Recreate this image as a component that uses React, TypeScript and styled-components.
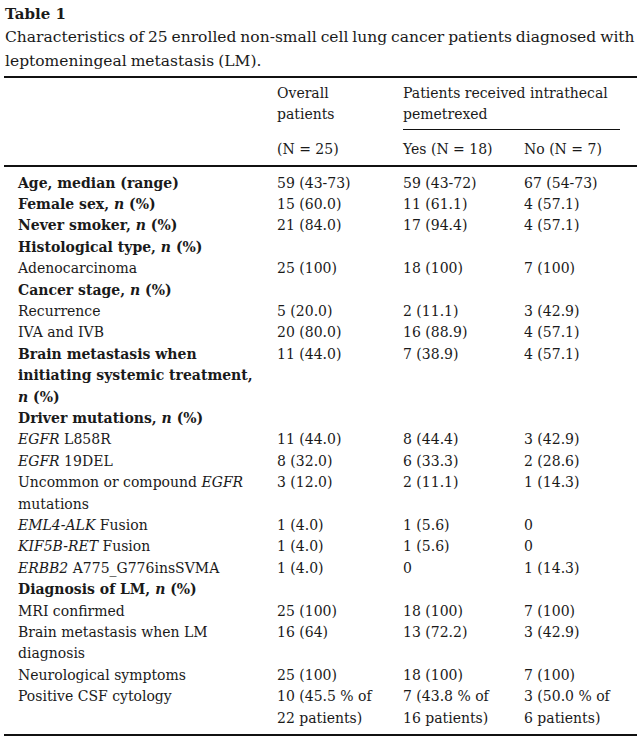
import React from 'react';
import styled, { createGlobalStyle } from 'styled-components';

const GlobalStyle = createGlobalStyle`
  body {
    margin: 0;
    background: #ffffff;
    color: #1a1a1a;
  }
`;

const Page = styled.div`
  width: 637px;
  padding: 4px 0 0 4px;
  box-sizing: border-box;
  overflow: hidden;
`;

const Caption = styled.div`
  font-family: 'DejaVu Serif', serif;
  padding-left: 1px;
`;

const Title = styled.div`
  font-weight: bold;
  font-size: 15px;
  line-height: 21px;
`;

const CaptionText = styled.div`
  font-size: 15.5px;
  line-height: 24px;
  word-spacing: -1px;
`;

const Table = styled.table`
  width: 633px;
  margin-top: 3px;
  border-collapse: collapse;
  table-layout: fixed;
  border-top: 2px solid #111;
  border-bottom: 2px solid #111;
`;

const HeadCell = styled.th<{ $top?: boolean }>`
  font-family: 'DejaVu Serif', serif;
  font-size: 14px;
  line-height: 20.5px;
  font-weight: normal;
  text-align: left;
  vertical-align: top;
  white-space: nowrap;
  padding: ${p => (p.$top ? '5px 0 0 0' : '9px 0 5px 0')};
`;

const HeadRow = styled.tr`
  &:last-child th {
    border-bottom: 2px solid #111;
  }
`;

const GroupHead = styled.div`
  margin-right: 17px;
  padding-bottom: 5px;
  border-bottom: 1.5px solid #111;
`;

const Body = styled.tbody`
  tr:first-child td {
    padding-top: 6px;
  }
  tr:last-child td {
    padding-bottom: 5px;
  }
`;

const Cell = styled.td<{ $label?: boolean; $bold?: boolean }>`
  font-family: 'DejaVu Serif', serif;
  font-size: 14px;
  line-height: 21.4px;
  font-weight: ${p => (p.$bold ? 'bold' : 'normal')};
  vertical-align: top;
  white-space: nowrap;
  padding: 0 0 0 ${p => (p.$label ? '14px' : '0')};
`;

const Em = styled.i`
  font-style: italic;
`;

type Row = {
  label: React.ReactNode;
  bold?: boolean;
  v?: React.ReactNode[];
};

const n = <Em>n</Em>;

const rows: Row[] = [
  { label: 'Age, median (range)', bold: true, v: ['59 (43-73)', '59 (43-72)', '67 (54-73)'] },
  { label: <>Female sex, {n} (%)</>, bold: true, v: ['15 (60.0)', '11 (61.1)', '4 (57.1)'] },
  { label: <>Never smoker, {n} (%)</>, bold: true, v: ['21 (84.0)', '17 (94.4)', '4 (57.1)'] },
  { label: <>Histological type, {n} (%)</>, bold: true },
  { label: 'Adenocarcinoma', v: ['25 (100)', '18 (100)', '7 (100)'] },
  { label: <>Cancer stage, {n} (%)</>, bold: true },
  { label: 'Recurrence', v: ['5 (20.0)', '2 (11.1)', '3 (42.9)'] },
  { label: 'IVA and IVB', v: ['20 (80.0)', '16 (88.9)', '4 (57.1)'] },
  {
    label: (
      <>
        Brain metastasis when
        <br />
        initiating systemic treatment,
        <br />
        {n} (%)
      </>
    ),
    bold: true,
    v: ['11 (44.0)', '7 (38.9)', '4 (57.1)'],
  },
  { label: <>Driver mutations, {n} (%)</>, bold: true },
  { label: <><Em>EGFR</Em> L858R</>, v: ['11 (44.0)', '8 (44.4)', '3 (42.9)'] },
  { label: <><Em>EGFR</Em> 19DEL</>, v: ['8 (32.0)', '6 (33.3)', '2 (28.6)'] },
  {
    label: (
      <>
        Uncommon or compound <Em>EGFR</Em>
        <br />
        mutations
      </>
    ),
    v: ['3 (12.0)', '2 (11.1)', '1 (14.3)'],
  },
  { label: <><Em>EML4-ALK</Em> Fusion</>, v: ['1 (4.0)', '1 (5.6)', '0'] },
  { label: <><Em>KIF5B-RET</Em> Fusion</>, v: ['1 (4.0)', '1 (5.6)', '0'] },
  { label: <><Em>ERBB2</Em> A775_G776insSVMA</>, v: ['1 (4.0)', '0', '1 (14.3)'] },
  { label: <>Diagnosis of LM, {n} (%)</>, bold: true },
  { label: 'MRI confirmed', v: ['25 (100)', '18 (100)', '7 (100)'] },
  {
    label: (
      <>
        Brain metastasis when LM
        <br />
        diagnosis
      </>
    ),
    v: ['16 (64)', '13 (72.2)', '3 (42.9)'],
  },
  { label: 'Neurological symptoms', v: ['25 (100)', '18 (100)', '7 (100)'] },
  {
    label: 'Positive CSF cytology',
    v: [
      <>10 (45.5 % of<br />22 patients)</>,
      <>7 (43.8 % of<br />16 patients)</>,
      <>3 (50.0 % of<br />6 patients)</>,
    ],
  },
];

const App: React.FC = () => {
  return (
    <>
      <GlobalStyle />
      <Page>
        <Caption>
          <Title>Table 1</Title>
          <CaptionText>
            Characteristics of 25 enrolled non-small cell lung cancer patients diagnosed with
            <br />
            leptomeningeal metastasis (LM).
          </CaptionText>
        </Caption>
        <Table>
          <colgroup>
            <col style={{ width: 273 }} />
            <col style={{ width: 126 }} />
            <col style={{ width: 121 }} />
            <col style={{ width: 113 }} />
          </colgroup>
          <thead>
            <HeadRow>
              <HeadCell $top />
              <HeadCell $top>
                Overall
                <br />
                patients
              </HeadCell>
              <HeadCell $top colSpan={2}>
                <GroupHead>
                  Patients received intrathecal
                  <br />
                  pemetrexed
                </GroupHead>
              </HeadCell>
            </HeadRow>
            <HeadRow>
              <HeadCell />
              <HeadCell>(N = 25)</HeadCell>
              <HeadCell>Yes (N = 18)</HeadCell>
              <HeadCell>No (N = 7)</HeadCell>
            </HeadRow>
          </thead>
          <Body>
            {rows.map((r, i) => (
              <tr key={i}>
                <Cell $label $bold={r.bold}>
                  {r.label}
                </Cell>
                {[0, 1, 2].map(j => (
                  <Cell key={j}>{r.v ? r.v[j] : null}</Cell>
                ))}
              </tr>
            ))}
          </Body>
        </Table>
      </Page>
    </>
  );
};

export default App;
